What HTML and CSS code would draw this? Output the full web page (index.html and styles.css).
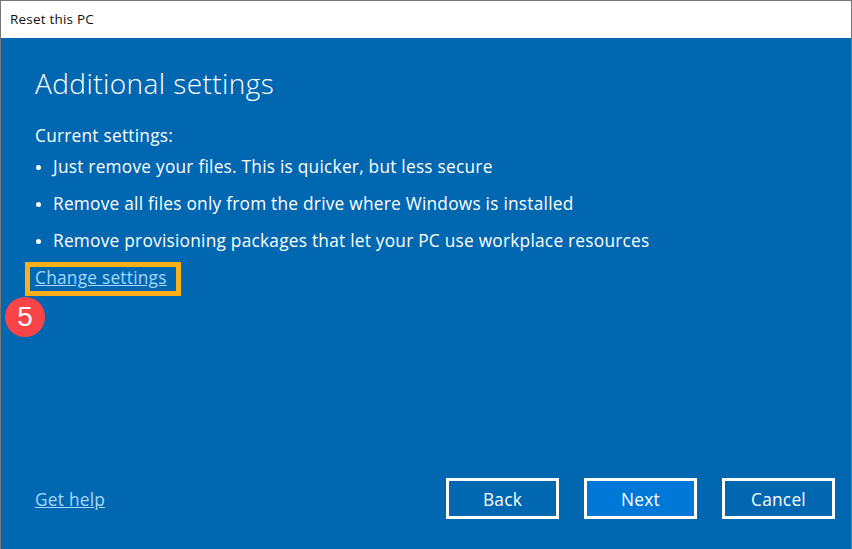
FILE: index.html
```html
<!DOCTYPE html>
<html lang="en">
<head>
  <meta charset="UTF-8">
  <title>Reset this PC</title>
  <link rel="stylesheet" href="styles.css">
</head>
<body>
  <div class="window">
    <div class="titlebar">Reset this PC</div>
    <div class="content">
      <h1>Additional settings</h1>
      <p class="current">Current settings:</p>
      <ul class="settings">
        <li>Just remove your files. This is quicker, but less secure</li>
        <li>Remove all files only from the drive where Windows is installed</li>
        <li>Remove provisioning packages that let your PC use workplace resources</li>
      </ul>
      <a class="link change" href="#">Change settings</a>
      <div class="highlight"></div>
      <div class="step">5</div>
      <div class="footer">
        <a class="link help" href="#">Get help</a>
        <div class="buttons">
          <button>Back</button>
          <button class="primary">Next</button>
          <button>Cancel</button>
        </div>
      </div>
    </div>
  </div>
</body>
</html>
```

FILE: styles.css
```css
html, body { margin: 0; height: 100%; }
body { font-family: "Open Sans", "Noto Sans", sans-serif; background: #fff; overflow: hidden; }
.window { height: 549px; box-sizing: border-box; border: 1px solid #767676; border-bottom: none; display: flex; flex-direction: column; }
.titlebar { height: 37px; line-height: 37px; padding-left: 9px; font-size: 13.5px; letter-spacing: .2px; color: #111; background: #fff; }
.content { flex: 1; position: relative; background: #0067b0; color: #fff; padding: 0 16px 30px 34px; display: flex; flex-direction: column; font-size: 17.3px; letter-spacing: .24px; }
h1 { margin: 25px 0 0; font-size: 28px; line-height: 40px; font-weight: 300; letter-spacing: .42px; }
.current { margin: 21px 0 0; line-height: 24px; }
.settings { list-style: none; margin: 0; padding: 0; line-height: 24px; }
.settings li { margin-top: 13px; padding-left: 18px; position: relative; }
.settings li:first-child { margin-top: 7px; }
.settings li::before { content: ""; position: absolute; left: 1px; top: 10px; width: 5px; height: 5px; border-radius: 50%; background: #fff; }
.link { color: #a6d8ff; line-height: 24px; text-decoration: underline; }
.change { align-self: flex-start; margin-top: 13px; }
.help { padding-top: 2px; }
.highlight { position: absolute; left: 24px; top: 224px; width: 146px; height: 24px; border: 5px solid #fcaf17; }
.step { position: absolute; left: 4px; top: 259px; width: 40px; height: 40px; border-radius: 50%; background: #fb4448; color: #fff; font-family: "Liberation Sans", sans-serif; font-size: 28px; line-height: 40px; text-align: center; letter-spacing: 0; }
.footer { margin-top: auto; display: flex; justify-content: space-between; align-items: center; }
.buttons { display: flex; gap: 25px; }
button { width: 113px; height: 41px; box-sizing: border-box; border: 3px solid #fff; background: transparent; color: #fff; font-family: inherit; font-size: inherit; letter-spacing: inherit; padding: 1px 0 0; }
.primary { background: #0078d7; }
```
